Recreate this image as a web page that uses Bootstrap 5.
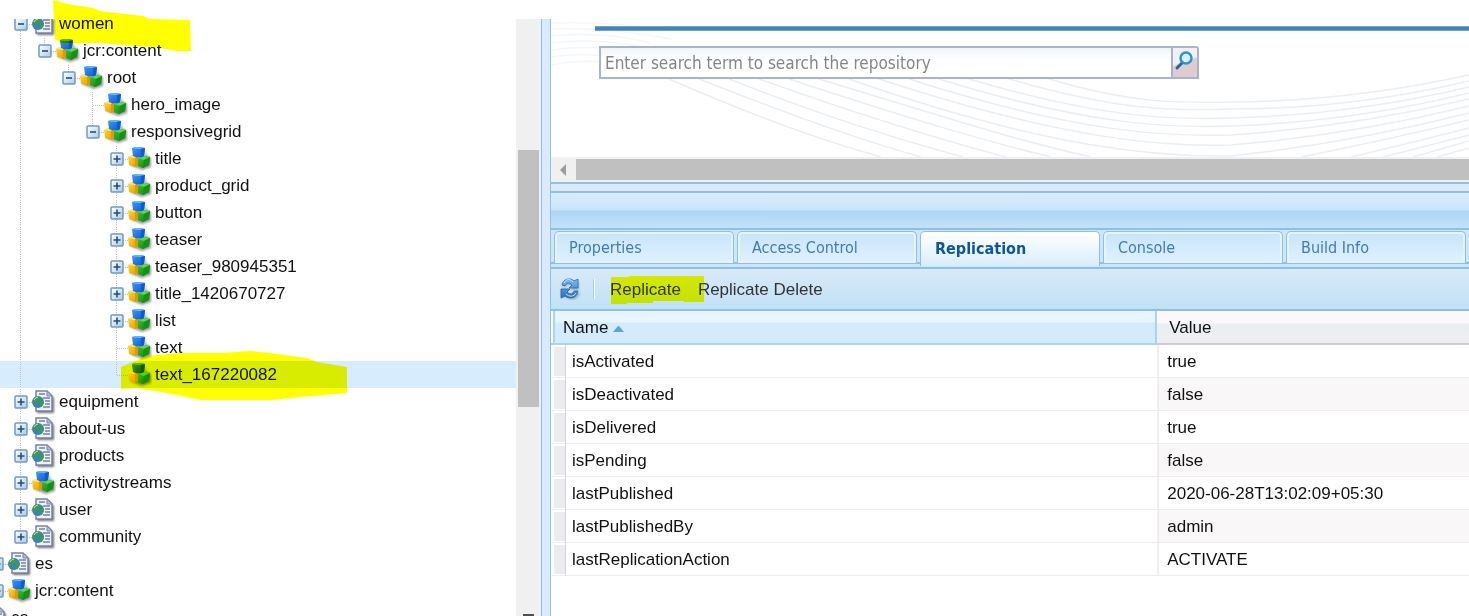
<!DOCTYPE html>
<html lang="en">
<head>
<meta charset="utf-8">
<meta name="viewport" content="width=device-width, initial-scale=1">
<title>Repository browser</title>
<link href="https://cdn.jsdelivr.net/npm/bootstrap@5.3.0/dist/css/bootstrap.min.css" rel="stylesheet">
<script src="https://cdn.jsdelivr.net/npm/bootstrap@5.3.0/dist/js/bootstrap.bundle.min.js"></script>
<style>
  :root { --edge: #8cc0e8; --dots: #c9bcc8; }
  body { font: 17px/27px "Liberation Sans", Arial, sans-serif; color: #111; background: #fff; }
  .workspace { padding-top: 19px; }
  .side { flex: 0 0 541px; }
  .gutter { flex: 0 0 10px; background: #d9eafa; border: 1px solid var(--edge); border-width: 0 1px; }

  /* node tree */
  .tree { margin: -9px 0 0 -40px; }
  .tree li { height: 27px; white-space: nowrap; }
  .tree li > * { flex: none; }
  .tree i, .elbow { width: 24px; height: 27px; }
  .tree .ln, .elbow {
    background-image: repeating-linear-gradient(#0000 0 1px, var(--dots) 1px 2px), repeating-linear-gradient(90deg, #0000 0 1px, var(--dots) 1px 2px);
    background-repeat: no-repeat; background-position: 12px 0, 12px 14px; background-size: 1px 100%, 0 0;
  }
  .tree .elbow { background-size: 1px 100%, 12px 1px; }
  .tree .elbow.last { background-size: 1px 14px, 12px 1px; }
  .toggle { display: block; width: 14px; height: 14px; margin: 7px 0 0 6px; padding: 0; border: 0; background: none; line-height: 0; }
  .toggle svg { display: block; }
  .tree a { color: #111; text-decoration: none; margin-left: 3px; }
  .tree .picked { background: #d7ecfd; }
  .track { width: 25px; background: #f0f0f0; padding: 0 2px; }
  .track .thumb { height: 43%; background: #c0c0c0; }
  .track .tick { width: 11px; height: 2px; background: #505050; }

  /* search pane */
  .hero { border-bottom: 2px solid var(--edge); height: 165px; }
  .hero .waves { inset: 0; width: 100%; height: 138px; }
  .rule { margin: 7px 0 0 44px; height: 5px; background: #4286b5; border: 1px solid #6ba4cc; border-width: 1px 0; }
  .finder { width: 600px; height: 33px; margin: 15px 0 0 48px; border: 2px solid #a6b3d4; border-radius: 0 3px 0 0; }
  .finder input { font: 17px "DejaVu Sans Condensed", Tahoma, sans-serif; border: 0; padding: 0 4px; min-width: 0; outline: 0; background: linear-gradient(#eef4f6, #fff 12px); }
  .finder input::placeholder { color: #858585; opacity: 1; }
  .finder button { width: 26px; border: 0; border-left: 2px solid #a6b3d4; padding: 0; background: linear-gradient(160deg, #f4eff2 45%, #ddcdd1 50%); }
  .finder button svg { display: block; }
  .hbar { height: 25px; background: #f0f0f0; padding: 2px 0; }
  .hbar .arrow { width: 25px; padding-left: 9px; }
  .hbar .thumb { background: #c0c0c0; }

  /* lower pane */
  .lower { margin-top: 7px; border-top: 2px solid var(--edge); }
  .band { height: 37px; border-bottom: 2px solid var(--edge); background: linear-gradient(#d9edfc, #c8e4f9 17px, #add5f5 18px, #c3e2f9); }
  .tabs { gap: 3px; height: 39px; padding: 1px 0 0 3px; overflow: hidden; border-bottom: 2px solid var(--edge); background: linear-gradient(#0000 32px, var(--edge) 32px 34px, #cfe6f9 34px), #cfe6f9; }
  .tabs button { flex: 0 0 180px; height: 32px; padding: 0 14px; text-align: left; font: 16px/32px "DejaVu Sans Condensed", Tahoma, sans-serif; color: #3c7eb4; background: linear-gradient(#c9e4fb, #dff1ff); border: 1px solid var(--edge); border-bottom: 0; border-radius: 5px 5px 0 0; box-shadow: inset 0 0 0 2px #e6f4fe; }
  .tabs button.active { height: 35px; font-weight: bold; color: #0f5697; background: linear-gradient(#fff, #d8edfd); box-shadow: none; }
  .tools { height: 42px; border-bottom: 2px solid var(--edge); background: linear-gradient(#d8e9f8, #c1e1f6); padding-left: 7px; }
  .tools button { border: 0; padding: 0; background: none; color: #333; }
  .tools .sep { width: 2px; height: 20px; background: linear-gradient(90deg, #a6cdec 50%, #fff 50%); margin: 0 15px 0 11px; }
  .tools .acts { gap: 17px; }

  .props { width: 100%; table-layout: fixed; border-collapse: separate; border-spacing: 0; }
  .props tr > * { height: 33px; padding: 2px 0 0 9px; border-bottom: 1px solid #ededed; font-weight: 400; line-height: 30px; }
  .props thead tr > * { height: 34px; padding: 2px 0 0 12px; border-bottom: 2px solid #d0c9cf; background: linear-gradient(#faf8fa 12px, #eaeff2 13px, #eeeef1); }
  .props thead tr > .sorted { background: linear-gradient(#e8f5fe 11px, #d3ebfd 12px); border-bottom-color: #a9d4f4; border-right: 2px solid #a5d4f6; box-shadow: inset 2px 0 #fff, inset 4px 0 #a5d4f6; }
  .props .grip { width: 15px; }
  .props .key { width: 64.4%; }
  .props tbody th { padding-left: 6px; }
  .props tbody td.stub { padding: 0; border-left: 3px solid #fff; border-right: 1px solid #dccfd5; background: linear-gradient(90deg, #e9eef1, #eaeaef); box-shadow: inset 0 2px #fff, inset 0 -1px #fff; }
  .props tbody td.val { border-left: 2px solid #eee; padding-left: 8px; }
  .props tbody tr:nth-child(even) .val { background: #faf7f9; }

  .marker { position: absolute; mix-blend-mode: multiply; pointer-events: none; fill: #ff0; }
  .mark-top { left: 53px; top: 0; }
  .mark-node { left: 121px; top: 351px; }
  .mark-tool { left: 0; top: 0; }
</style>
</head>
<body>
<svg width="0" height="0" class="position-absolute" aria-hidden="true">
  <defs>
    <linearGradient id="gb" x2="1" y2="1"><stop stop-color="#3d9cf8"/><stop offset="1" stop-color="#0a55cc"/></linearGradient>
    <linearGradient id="gy" x2="1" y2="1"><stop stop-color="#ffda3c"/><stop offset="1" stop-color="#dc9a00"/></linearGradient>
    <linearGradient id="gg" x2="1" y2="1"><stop stop-color="#3fc436"/><stop offset="1" stop-color="#0b7a0e"/></linearGradient>
    <linearGradient id="gt" x2="1" y2="1"><stop stop-color="#fff"/><stop offset="1" stop-color="#a9cbe6"/></linearGradient>
    <linearGradient id="gr" x2="0" y2="1"><stop stop-color="#7cbdf3"/><stop offset="1" stop-color="#2470bf"/></linearGradient>
    <filter id="soft" x="-20%" y="-20%" width="150%" height="150%"><feGaussianBlur stdDeviation="1"/></filter>
    <symbol id="cubes" viewBox="0 0 24 27">
      <path d="M2 20l7 3 5 2 9-3V13l-5-3V5l-3 9z" fill="#555" opacity=".6" filter="url(#soft)"/>
      <path d="M0 12q3-2 6-2l4 1v9l-3 2-6-2z" fill="url(#gy)"/><path d="M0 12q3-2 6-2l4 1-3 2z" fill="#ffe668"/><path d="M7 13l3-2v9l-3 2z" fill="#dd9a08"/>
      <path d="M10 13l6-2 6 1-1 8-6 3-5-2z" fill="url(#gg)"/><path d="M10 13l6-2 6 1-6 3z" fill="#62d450"/><path d="M16 15l6-3-1 8-6 3z" fill="#169018"/>
      <path d="M4 3q6-2 13 0l-1 8q-5 3-11 0z" fill="url(#gb)"/><path d="M4 3q6-2 13 0-6 2-13 0z" fill="#6ab6fb"/><path d="M13 4l4-1-1 8-3 1z" fill="#0c5bd2"/>
    </symbol>
    <symbol id="page" viewBox="0 0 24 27">
      <path d="M5 5h12l5 5v15H5z" fill="#444" opacity=".75" filter="url(#soft)"/>
      <path d="M4 3h11l5 5v15H4z" fill="#eef1f8" stroke="#7782a3" stroke-width="1.500"/>
      <path d="M15 3v5h5z" fill="#b3badb" stroke="#7d86aa"/>
      <path d="M7 6h6M11 10h7M13 13h5M13 16h5M11 19h7" stroke="#76819f" stroke-width="1.300"/>
      <circle cx="6" cy="14" r="6" fill="#3a7fc0"/>
      <path d="M2 10l4-2 3 2-2 3-3 1-1 3-2-2zM8 14l3-2 1 3-3 4-2-1z" fill="#3f9e3b"/>
      <path d="M2 12a5 5 0 0 1 4-3" stroke="#b8def2" fill="none"/>
    </symbol>
    <symbol id="minus" viewBox="0 0 14 14"><rect x="1" y="1" width="12" height="12" rx="1" fill="url(#gt)" stroke="#6f9cbe" stroke-width="1.500"/><path d="M4 7h6" stroke="#234e76" stroke-width="1.600"/></symbol>
    <symbol id="plus" viewBox="0 0 14 14"><rect x="1" y="1" width="12" height="12" rx="1" fill="url(#gt)" stroke="#6f9cbe" stroke-width="1.500"/><path d="M3.500 7h7M7 3.500v7" stroke="#234e76" stroke-width="1.600"/></symbol>
  </defs>
</svg>

<div class="workspace vh-100 d-flex overflow-hidden position-relative">
  <nav class="side d-flex overflow-hidden" aria-label="Repository tree">
    <ul class="tree list-unstyled flex-grow-1">
      <li class="d-flex"><i></i><i></i><span class="elbow"><button class="toggle" aria-label="Collapse"><svg width="14" height="14"><use href="#minus"/></svg></button></span><svg width="24" height="27"><use href="#page"/></svg><a href="#">women</a></li>
      <li class="d-flex"><i></i><i></i><i class="ln"></i><span class="elbow last"><button class="toggle" aria-label="Collapse"><svg width="14" height="14"><use href="#minus"/></svg></button></span><svg width="24" height="27"><use href="#cubes"/></svg><a href="#">jcr:content</a></li>
      <li class="d-flex"><i></i><i></i><i class="ln"></i><i></i><span class="elbow last"><button class="toggle" aria-label="Collapse"><svg width="14" height="14"><use href="#minus"/></svg></button></span><svg width="24" height="27"><use href="#cubes"/></svg><a href="#">root</a></li>
      <li class="d-flex"><i></i><i></i><i class="ln"></i><i></i><i></i><span class="elbow"></span><svg width="24" height="27"><use href="#cubes"/></svg><a href="#">hero_image</a></li>
      <li class="d-flex"><i></i><i></i><i class="ln"></i><i></i><i></i><span class="elbow last"><button class="toggle" aria-label="Collapse"><svg width="14" height="14"><use href="#minus"/></svg></button></span><svg width="24" height="27"><use href="#cubes"/></svg><a href="#">responsivegrid</a></li>
      <li class="d-flex"><i></i><i></i><i class="ln"></i><i></i><i></i><i></i><span class="elbow"><button class="toggle" aria-label="Expand"><svg width="14" height="14"><use href="#plus"/></svg></button></span><svg width="24" height="27"><use href="#cubes"/></svg><a href="#">title</a></li>
      <li class="d-flex"><i></i><i></i><i class="ln"></i><i></i><i></i><i></i><span class="elbow"><button class="toggle" aria-label="Expand"><svg width="14" height="14"><use href="#plus"/></svg></button></span><svg width="24" height="27"><use href="#cubes"/></svg><a href="#">product_grid</a></li>
      <li class="d-flex"><i></i><i></i><i class="ln"></i><i></i><i></i><i></i><span class="elbow"><button class="toggle" aria-label="Expand"><svg width="14" height="14"><use href="#plus"/></svg></button></span><svg width="24" height="27"><use href="#cubes"/></svg><a href="#">button</a></li>
      <li class="d-flex"><i></i><i></i><i class="ln"></i><i></i><i></i><i></i><span class="elbow"><button class="toggle" aria-label="Expand"><svg width="14" height="14"><use href="#plus"/></svg></button></span><svg width="24" height="27"><use href="#cubes"/></svg><a href="#">teaser</a></li>
      <li class="d-flex"><i></i><i></i><i class="ln"></i><i></i><i></i><i></i><span class="elbow"><button class="toggle" aria-label="Expand"><svg width="14" height="14"><use href="#plus"/></svg></button></span><svg width="24" height="27"><use href="#cubes"/></svg><a href="#">teaser_980945351</a></li>
      <li class="d-flex"><i></i><i></i><i class="ln"></i><i></i><i></i><i></i><span class="elbow"><button class="toggle" aria-label="Expand"><svg width="14" height="14"><use href="#plus"/></svg></button></span><svg width="24" height="27"><use href="#cubes"/></svg><a href="#">title_1420670727</a></li>
      <li class="d-flex"><i></i><i></i><i class="ln"></i><i></i><i></i><i></i><span class="elbow"><button class="toggle" aria-label="Expand"><svg width="14" height="14"><use href="#plus"/></svg></button></span><svg width="24" height="27"><use href="#cubes"/></svg><a href="#">list</a></li>
      <li class="d-flex"><i></i><i></i><i class="ln"></i><i></i><i></i><i></i><span class="elbow"></span><svg width="24" height="27"><use href="#cubes"/></svg><a href="#">text</a></li>
      <li class="d-flex picked"><i></i><i></i><i class="ln"></i><i></i><i></i><i></i><span class="elbow last"></span><svg width="24" height="27"><use href="#cubes"/></svg><a href="#">text_167220082</a></li>
      <li class="d-flex"><i></i><i></i><span class="elbow"><button class="toggle" aria-label="Expand"><svg width="14" height="14"><use href="#plus"/></svg></button></span><svg width="24" height="27"><use href="#page"/></svg><a href="#">equipment</a></li>
      <li class="d-flex"><i></i><i></i><span class="elbow"><button class="toggle" aria-label="Expand"><svg width="14" height="14"><use href="#plus"/></svg></button></span><svg width="24" height="27"><use href="#page"/></svg><a href="#">about-us</a></li>
      <li class="d-flex"><i></i><i></i><span class="elbow"><button class="toggle" aria-label="Expand"><svg width="14" height="14"><use href="#plus"/></svg></button></span><svg width="24" height="27"><use href="#page"/></svg><a href="#">products</a></li>
      <li class="d-flex"><i></i><i></i><span class="elbow"><button class="toggle" aria-label="Expand"><svg width="14" height="14"><use href="#plus"/></svg></button></span><svg width="24" height="27"><use href="#cubes"/></svg><a href="#">activitystreams</a></li>
      <li class="d-flex"><i></i><i></i><span class="elbow"><button class="toggle" aria-label="Expand"><svg width="14" height="14"><use href="#plus"/></svg></button></span><svg width="24" height="27"><use href="#page"/></svg><a href="#">user</a></li>
      <li class="d-flex"><i></i><i></i><span class="elbow last"><button class="toggle" aria-label="Expand"><svg width="14" height="14"><use href="#plus"/></svg></button></span><svg width="24" height="27"><use href="#page"/></svg><a href="#">community</a></li>
      <li class="d-flex"><i></i><span class="elbow"><button class="toggle" aria-label="Expand"><svg width="14" height="14"><use href="#plus"/></svg></button></span><svg width="24" height="27"><use href="#page"/></svg><a href="#">es</a></li>
      <li class="d-flex"><i></i><span class="elbow last"><button class="toggle" aria-label="Expand"><svg width="14" height="14"><use href="#plus"/></svg></button></span><svg width="24" height="27"><use href="#cubes"/></svg><a href="#">jcr:content</a></li>
      <li class="d-flex"><span class="elbow"><button class="toggle" aria-label="Expand"><svg width="14" height="14"><use href="#plus"/></svg></button></span><svg width="24" height="27"><use href="#page"/></svg><a href="#">ca</a></li>
    </ul>
    <div class="track d-flex flex-column align-items-center">
      <div style="height:22%"></div>
      <div class="thumb w-100"></div>
      <div class="tick mt-auto"></div>
    </div>
  </nav>
  <div class="gutter"></div>

  <main class="flex-grow-1 overflow-hidden" style="background:#d9eafa">
    <section class="hero bg-white">
      <div class="position-relative h-100 d-flex flex-column">
        <svg class="waves position-absolute" viewBox="0 0 918 138" preserveAspectRatio="none" fill="none" stroke="#e3eaf1" stroke-width="1.500" aria-hidden="true">
          <g stroke="#f4f7fa"><path d="M0 4Q60 2 120 12M0 10Q60 8 120 20M0 17Q50 12 100 24M0 24Q50 18 100 30M0 31Q40 25 90 34M0 38Q40 32 90 42M0 46Q40 37 90 50"/></g>
          <path d="M498 60C580 84 620 84 680 83Q800 82 918 56M458 60C570 92 620 92 680 90Q800 90 918 62M418 60C550 99 620 101 680 99Q800 96 918 68M388 60C540 107 620 109 680 107Q800 103 918 74M358 60C530 115 620 118 680 116Q800 108 918 80M328 60C520 123 620 128 680 126Q800 116 918 87M298 60C500 131 610 138 680 137Q800 124 918 94M268 60C400 100 460 120 540 138M750 138Q840 120 918 101M238 60C360 100 430 121 500 138M800 138Q860 124 918 109M208 60C320 100 390 121 455 138M832 138Q880 126 918 116M178 60C280 100 350 121 412 138M862 138L918 122M148 60C250 100 310 121 370 138M886 138L918 129M118 60C210 100 270 121 330 138" opacity=".8"/>
        </svg>
        <div class="rule position-relative"></div>
        <form class="finder d-flex position-relative bg-white" role="search" onsubmit="return false">
          <input type="text" class="flex-grow-1" aria-label="Search the repository" placeholder="Enter search term to search the repository">
          <button type="submit" aria-label="Search"><svg width="22" height="27" viewBox="0 0 22 27" fill="none"><path d="M9 14l-5 5" stroke="#2865a5" stroke-width="3" stroke-linecap="round"/><circle cx="13" cy="9" r="5.500" fill="#d9effb" stroke="#2b95d0" stroke-width="2.500"/></svg></button>
        </form>
        <div class="hbar d-flex align-items-center mt-auto position-relative">
          <div class="arrow d-flex"><svg width="6" height="12"><path d="M6 0v12L0 6z" fill="#9c9c9c"/></svg></div>
          <div class="thumb flex-grow-1 h-100"></div>
        </div>
      </div>
    </section>

    <section class="lower bg-white h-100">
      <div class="band"></div>
      <div class="tabs d-flex" role="tablist">
        <button role="tab">Properties</button>
        <button role="tab">Access Control</button>
        <button role="tab" class="active" aria-selected="true">Replication</button>
        <button role="tab">Console</button>
        <button role="tab">Build Info</button>
      </div>
      <div class="tools d-flex align-items-center">
        <button aria-label="Refresh" class="d-flex"><svg width="24" height="24" viewBox="0 0 24 24"><path d="M4 9C6 3 12 1 17 5l4-1v9h-9l2-3c-2-3-5-3-6 0zM22 16c-2 7-9 8-14 4l-5 1v-9h9l-3 3c3 3 6 3 7 0z" fill="#777" opacity=".5" filter="url(#soft)"/><path d="M4 8C5 2 12 0 16 4l4-2v9h-9l3-3c-3-3-6-2-7 1zM20 14c-1 7-8 9-13 5l-4 2v-9h9l-3 3c3 3 6 2 7-1z" fill="url(#gr)" stroke="#2a67ad" stroke-width=".8" stroke-linejoin="round"/><path d="M6 6c2-4 6-5 9-1M18 16c-2 4-7 4-10 1" stroke="#cbe6fb" fill="none"/></svg></button>
        <span class="sep"></span>
        <div class="acts position-relative d-flex">
          <button>Replicate</button>
          <button>Replicate Delete</button>
          <svg class="marker mark-tool" width="94" height="29" viewBox="0 0 94 29" aria-hidden="true"><path d="M1 1h18V0h75v26H74v-1H43v2H17v1H1z"/></svg>
        </div>
      </div>
      <table class="props">
        <colgroup><col class="grip"><col class="key"><col></colgroup>
        <thead><tr><th class="sorted" colspan="2" scope="col" aria-sort="ascending">Name <svg width="11" height="6"><path d="M0 6l5-6h1l5 6z" fill="#5aa5df"/></svg></th><th scope="col">Value</th></tr></thead>
        <tbody>
          <tr><td class="stub"></td><th scope="row">isActivated</th><td class="val">true</td></tr>
          <tr><td class="stub"></td><th scope="row">isDeactivated</th><td class="val">false</td></tr>
          <tr><td class="stub"></td><th scope="row">isDelivered</th><td class="val">true</td></tr>
          <tr><td class="stub"></td><th scope="row">isPending</th><td class="val">false</td></tr>
          <tr><td class="stub"></td><th scope="row">lastPublished</th><td class="val">2020-06-28T13:02:09+05:30</td></tr>
          <tr><td class="stub"></td><th scope="row">lastPublishedBy</th><td class="val">admin</td></tr>
          <tr><td class="stub"></td><th scope="row">lastReplicationAction</th><td class="val">ACTIVATE</td></tr>
        </tbody>
      </table>
    </section>
  </main>

  <svg class="marker mark-top" width="139" height="52" viewBox="53 0 139 52" aria-hidden="true"><path d="M53 0l15 4 25 4 7 3 43 5 7 3 40 1 1 31h-14l-17-3-60-5H60l-5-4z"/></svg>
  <svg class="marker mark-node" width="226" height="50" viewBox="121 351 226 50" aria-hidden="true"><path d="M121 367l26-11 33-3h43l27-2 20 2 37 5 10 4 30 5v26l-47 4-27 3h-73l-33-7-29-5-17 1z"/></svg>
</div>
</body>
</html>
